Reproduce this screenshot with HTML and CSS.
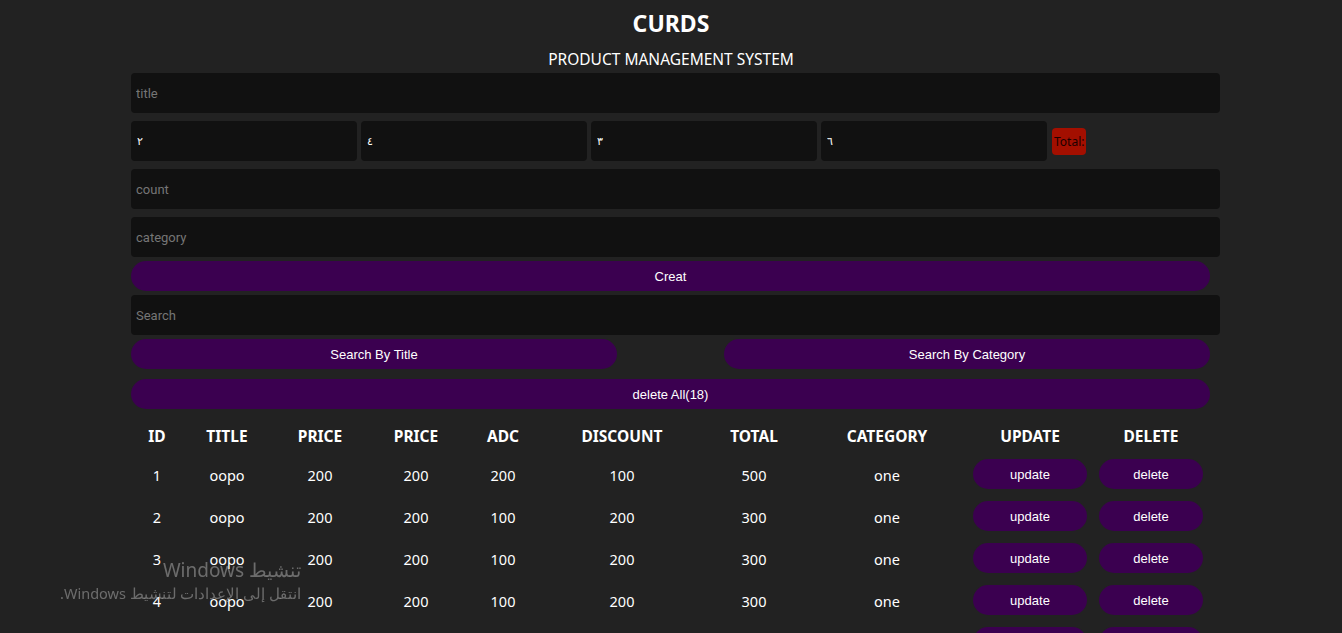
FILE: index.html
```html
<!DOCTYPE html>
<html lang="en">
<head>
<meta charset="utf-8">
<title>CURDS</title>
<link rel="stylesheet" href="styles.css">
</head>
<body>
<header class="head">
  <h1 class="head-title">CURDS</h1>
  <h2 class="head-sub">PRODUCT MANAGEMENT SYSTEM</h2>
</header>
<main class="crud">
  <div class="inputs">
    <input class="field" type="text" placeholder="title">
    <div class="price-row">
      <input class="field field-price" type="text" value="٢">
      <input class="field field-price" type="text" value="٤">
      <input class="field field-price" type="text" value="٣">
      <input class="field field-price" type="text" value="٦">
      <small class="total">Total:</small>
    </div>
    <input class="field" type="text" placeholder="count">
    <input class="field" type="text" placeholder="category">
    <button class="btn btn-wide btn-create">Creat</button>
  </div>
  <div class="search-block">
    <input class="field" type="text" placeholder="Search">
    <div class="search-btns">
      <button class="btn btn-half">Search By Title</button>
      <button class="btn btn-half">Search By Category</button>
    </div>
  </div>
  <div class="delete-all">
    <button class="btn btn-wide">delete All(18)</button>
  </div>
  <table class="table">
    <colgroup>
      <col class="c-id"><col class="c-title"><col class="c-price"><col class="c-price2"><col class="c-adc"><col class="c-disc"><col class="c-total"><col class="c-cat"><col class="c-upd"><col class="c-del">
    </colgroup>
    <thead>
      <tr><th>ID</th><th>TITLE</th><th>PRICE</th><th>PRICE</th><th>ADC</th><th>DISCOUNT</th><th>TOTAL</th><th>CATEGORY</th><th>UPDATE</th><th>DELETE</th></tr>
    </thead>
    <tbody>
      <tr><td>1</td><td>oopo</td><td>200</td><td>200</td><td>200</td><td>100</td><td>500</td><td>one</td><td><button class="btn btn-upd">update</button></td><td><button class="btn btn-del">delete</button></td></tr>
      <tr><td>2</td><td>oopo</td><td>200</td><td>200</td><td>100</td><td>200</td><td>300</td><td>one</td><td><button class="btn btn-upd">update</button></td><td><button class="btn btn-del">delete</button></td></tr>
      <tr><td>3</td><td>oopo</td><td>200</td><td>200</td><td>100</td><td>200</td><td>300</td><td>one</td><td><button class="btn btn-upd">update</button></td><td><button class="btn btn-del">delete</button></td></tr>
      <tr><td>4</td><td>oopo</td><td>200</td><td>200</td><td>100</td><td>200</td><td>300</td><td>one</td><td><button class="btn btn-upd">update</button></td><td><button class="btn btn-del">delete</button></td></tr>
      <tr><td>5</td><td>oopo</td><td>200</td><td>200</td><td>100</td><td>200</td><td>300</td><td>one</td><td><button class="btn btn-upd">update</button></td><td><button class="btn btn-del">delete</button></td></tr>
      <tr><td>6</td><td>oopo</td><td>200</td><td>200</td><td>100</td><td>200</td><td>300</td><td>one</td><td><button class="btn btn-upd">update</button></td><td><button class="btn btn-del">delete</button></td></tr>
    </tbody>
  </table>
</main>
<div class="watermark" dir="rtl">
  <div class="wm-big">تنشيط Windows</div>
  <div class="wm-small">انتقل إلى الإعدادات لتنشيط Windows.</div>
</div>
</body>
</html>
```
FILE: styles.css
```css
* { box-sizing: border-box; }

body {
  margin: 0;
  background: #222222;
  color: #ffffff;
  font-family: "Noto Sans", "Open Sans", sans-serif;
}

.head {
  text-align: center;
  padding-top: 8px;
}

.head-title {
  margin: 0;
  font-size: 23px;
  line-height: 30px;
  font-weight: 700;
}

.head-sub {
  margin: 11px 0 0;
  font-size: 15.5px;
  line-height: 20px;
  font-weight: 400;
}

.crud {
  width: 1089px;
  margin: 4px 0 0 131px;
}

.inputs {
  display: flex;
  flex-direction: column;
  gap: 8px;
}

.field {
  display: block;
  width: 100%;
  height: 40px;
  border: none;
  outline: none;
  border-radius: 4px;
  background: #111111;
  color: #ffffff;
  padding: 0 5px;
  font-family: Roboto, "Liberation Sans", sans-serif;
  font-size: 13px;
}

.field::placeholder {
  color: #767676;
}

.price-row {
  display: flex;
  align-items: center;
  gap: 4px;
}

.field-price {
  width: 226px;
  flex: none;
  font-size: 11px;
  padding-left: 6px;
}

.total {
  margin-left: 1px;
  background: #a30f00;
  color: #1a0000;
  border-radius: 4px;
  height: 27px;
  line-height: 27px;
  padding: 0 2px;
  font-family: "Noto Sans", sans-serif;
  font-size: 12px;
}

.btn {
  border: none;
  background: #3b0050;
  color: #ffffff;
  border-radius: 15px;
  height: 30px;
  font-family: "Liberation Sans", Arial, sans-serif;
  font-size: 13px;
  cursor: pointer;
}

.btn-wide {
  display: block;
  width: 1079px;
}

.btn-create {
  margin-top: -4px;
}

.search-block {
  margin-top: 4px;
  display: flex;
  flex-direction: column;
  gap: 4px;
}

.search-btns {
  width: 1079px;
  display: flex;
  justify-content: space-between;
}

.btn-half {
  width: 486px;
}

.delete-all {
  margin-top: 10px;
}

.table {
  margin-top: 10px;
  width: 1078px;
  border-collapse: collapse;
  table-layout: fixed;
  text-align: center;
}

.c-id { width: 52px; }
.c-title { width: 88px; }
.c-price { width: 98px; }
.c-price2 { width: 94px; }
.c-adc { width: 80px; }
.c-disc { width: 158px; }
.c-total { width: 106px; }
.c-cat { width: 160px; }
.c-upd { width: 126px; }
.c-del { width: 116px; }

.table th {
  height: 34px;
  padding: 0;
  font-size: 15.5px;
  font-weight: 700;
  text-transform: uppercase;
}

.table td {
  height: 42px;
  padding: 2px 0 0;
  font-size: 14.5px;
}

.btn-upd { width: 114px; margin-top: -2px; }
.btn-del { width: 104px; margin-top: -2px; }

.watermark {
  position: fixed;
  left: 40px;
  top: 557px;
  width: 261px;
  color: rgba(200, 200, 200, 0.45);
  text-align: right;
  pointer-events: none;
}

.wm-big {
  font-size: 19px;
  line-height: 26px;
}

.wm-small {
  font-size: 14.5px;
  line-height: 21px;
}
```
